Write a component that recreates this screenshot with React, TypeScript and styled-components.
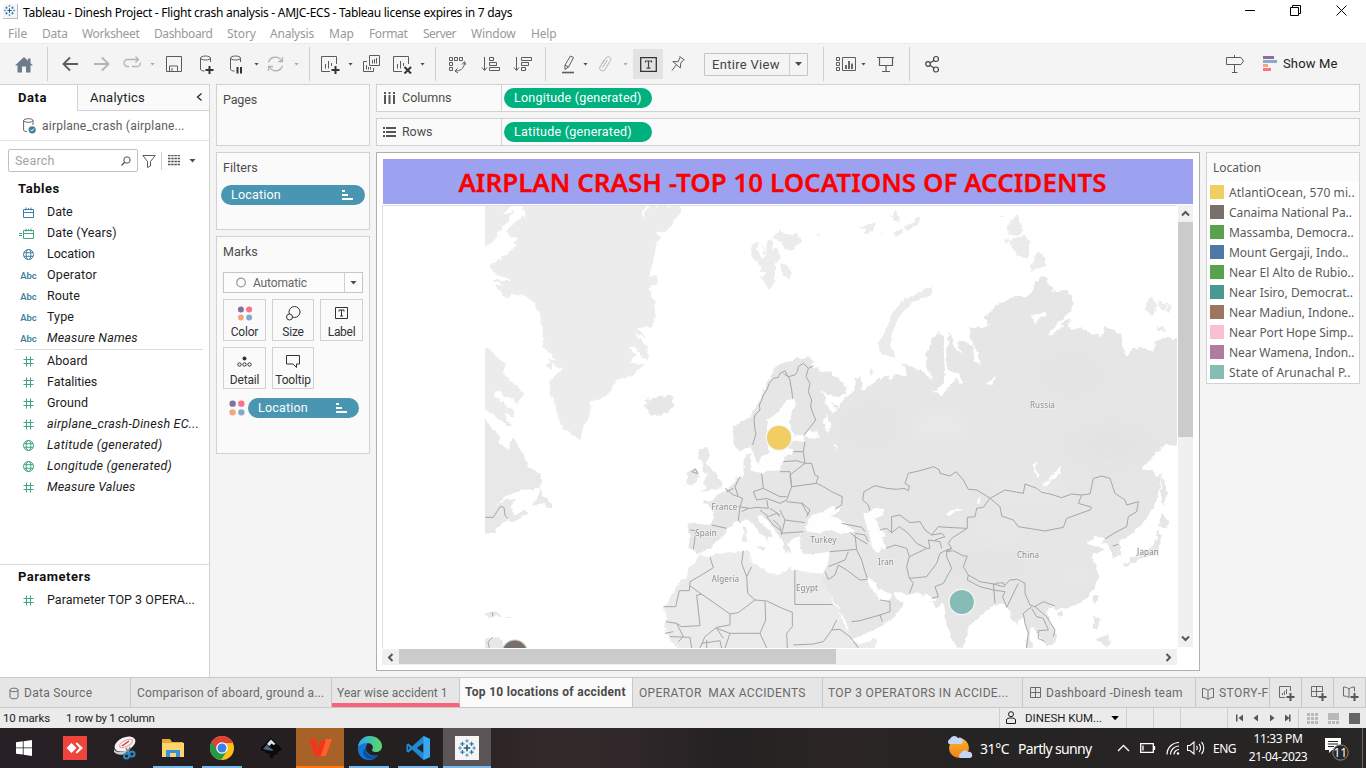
import React from 'react';
import styled, { createGlobalStyle } from 'styled-components';

const UI = 'Roboto, "Liberation Sans", sans-serif';
const SYS = '"Noto Sans", "Open Sans", sans-serif';

const GlobalStyle = createGlobalStyle`
  * { box-sizing: border-box; }
  body { margin: 0; background: #f4f4f4; font-family: ${UI}; font-size: 12.5px; color: #222; overflow: hidden; }
  svg { display: block; flex: none; }
`;

const Window = styled.div`
  width: 1366px;
  height: 768px;
  display: flex;
  flex-direction: column;
  background: #f4f4f4;
`;

const Txt = styled.span<{ $ls?: number }>`
  white-space: pre;
  letter-spacing: ${(p) => p.$ls ?? 0}px;
`;

/* ---------- window chrome ---------- */
const TitleBar = styled.header`
  height: 24px;
  flex: none;
  background: #fff;
  display: flex;
  align-items: center;
  padding-left: 3px;
  font: 12px ${SYS};
  color: #000;
`;
const AppIcon = styled.div`
  width: 15px;
  height: 15px;
  margin-right: 5px;
  margin-top: -2px;
  border-right: 1px solid #bbb;
  border-bottom: 1px solid #bbb;
  background: #f7f7f7;
`;
const WindowButtons = styled.div`
  margin-left: auto;
  margin-right: 19px;
  margin-top: -4px;
  display: flex;
  gap: 35px;
`;
const MenuBar = styled.nav`
  height: 19px;
  flex: none;
  background: #fff;
  display: flex;
  align-items: center;
  padding-left: 8px;
  font: 12px ${SYS};
  color: #999;
`;
const MenuItem = styled.span<{ $w: number; $ls: number }>`
  width: ${(p) => p.$w}px;
  white-space: nowrap;
  letter-spacing: ${(p) => p.$ls}px;
`;

/* ---------- toolbar ---------- */
const Toolbar = styled.div`
  height: 41px;
  flex: none;
  display: flex;
  align-items: center;
  border-top: 1px solid #ececec;
`;
const Tool = styled.div<{ $gap: number; $w: number; $dim?: boolean }>`
  margin-left: ${(p) => p.$gap}px;
  width: ${(p) => p.$w}px;
  flex: none;
  display: flex;
  justify-content: center;
  color: ${(p) => (p.$dim ? '#b4b4b4' : '#5c5c5c')};
`;
const ToolActive = styled(Tool)`
  height: 30px;
  align-items: center;
  background: #e3e3e3;
`;
const Divider = styled.div<{ $gap: number }>`
  margin-left: ${(p) => p.$gap}px;
  width: 1px;
  height: 34px;
  flex: none;
  background: #cfcfcf;
`;
const Caret = styled.i<{ $gap?: number; $dim?: boolean; $w?: number; $c?: string }>`
  margin-left: ${(p) => p.$gap ?? 0}px;
  flex: none;
  width: ${(p) => p.$w ?? 5}px;
  height: ${(p) => ((p.$w ?? 5) + 1) / 2}px;
  background: ${(p) => p.$c ?? (p.$dim ? '#a8a8a8' : '#4c4c4c')};
  clip-path: polygon(0 0, 100% 0, 50% 100%);
`;
const FitSelect = styled.div`
  margin-left: 19px;
  width: 104px;
  height: 23px;
  flex: none;
  display: flex;
  align-items: center;
  border: 1px solid #c4c4c4;
  border-radius: 1px;
  padding-left: 7px;
  font-size: 13px;
  color: #444;
`;
const SelectArrow = styled.div<{ $w: number }>`
  width: ${(p) => p.$w}px;
  margin-left: auto;
  align-self: stretch;
  display: flex;
  align-items: center;
  justify-content: center;
  border-left: 1px solid #d0d0d0;
`;
const ShowMe = styled.div`
  margin-left: 6px;
  padding-bottom: 1px;
  font-size: 13px;
  letter-spacing: 0.15px;
  color: #222;
`;

/* ---------- body ---------- */
const Body = styled.main`
  height: 593px;
  flex: none;
  display: flex;
`;
const DataPane = styled.aside`
  width: 210px;
  flex: none;
  background: #fff;
  border-right: 1px solid #d2d2d2;
  border-top: 1px solid #d2d2d2;
  display: flex;
  flex-direction: column;
`;
const PaneTabs = styled.div`
  height: 26px;
  flex: none;
  display: flex;
  font-size: 13px;
`;
const PaneTab = styled.div<{ $active?: boolean }>`
  display: flex;
  align-items: center;
  ${(p) =>
    p.$active
      ? 'width:77px;padding:0 0 1px 18px;font-weight:700;color:#111;'
      : 'flex:1;padding:0 7px 0 12px;justify-content:space-between;background:#fafafa;border-left:1px solid #d2d2d2;border-bottom:1px solid #d2d2d2;color:#222;'}
`;
const SourceRow = styled.div`
  height: 30px;
  flex: none;
  display: flex;
  align-items: center;
  gap: 6px;
  padding-left: 23px;
  border-bottom: 1px solid #e2e2e2;
  font-size: 12px;
  color: #5c5c5c;
`;
const SearchRow = styled.div`
  display: flex;
  align-items: center;
  margin-top: 8px;
  padding-left: 8px;
  height: 23px;
`;
const SearchBox = styled.div`
  width: 130px;
  height: 23px;
  border: 1px solid #c0c0c0;
  border-radius: 2px;
  display: flex;
  align-items: center;
  justify-content: space-between;
  padding: 0 6px;
  color: #a3a3a3;
`;
const SearchIcon = styled.div`
  color: #555;
`;
const SearchSep = styled.div`
  width: 1px;
  height: 18px;
  margin: 0 6px 0 5px;
  background: #cfcfcf;
`;
const GroupTitle = styled.div`
  height: 24px;
  margin-top: 5px;
  padding-left: 18px;
  line-height: 23px;
  font-size: 13px;
  font-weight: 700;
  color: #111;
`;
const Field = styled.div<{ $italic?: boolean }>`
  height: 21px;
  display: flex;
  align-items: center;
  color: #1c1c1c;
  font-style: ${(p) => (p.$italic ? 'italic' : 'normal')};
`;
const FieldIcon = styled.div<{ $c: string; $eq?: boolean }>`
  width: 47px;
  padding: 1px 10px 0 ${(p) => (p.$eq ? 16 : 20)}px;
  display: flex;
  justify-content: center;
  align-items: center;
  flex: none;
  color: ${(p) => p.$c};
  font: 600 9.5px ${UI};
`;
const FieldRule = styled.div`
  height: 1px;
  margin: 1px 6px 0 15px;
  background: #dcdcdc;
`;
const Params = styled.div`
  margin-top: auto;
  height: 113px;
  border-top: 1px solid #dcdcdc;
`;
const ParamTitle = styled(GroupTitle)`
  margin-top: 0;
`;

const Cards = styled.section`
  width: 154px;
  margin-left: 6px;
  flex: none;
  display: flex;
  flex-direction: column;
  gap: 6px;
`;
const Card = styled.div<{ $h: number }>`
  height: ${(p) => p.$h}px;
  flex: none;
  background: #fafafa;
  border: 1px solid #d2d2d2;
  color: #4c4c4c;
`;
const CardTitle = styled.div`
  height: 30px;
  padding-left: 6px;
  line-height: 29px;
`;
const Pill = styled.div<{ $w: number; $c: string }>`
  width: ${(p) => p.$w}px;
  height: 20px;
  flex: none;
  border-radius: 10px;
  background: ${(p) => p.$c};
  color: #fff;
  display: flex;
  align-items: center;
  justify-content: space-between;
  padding: 0 12px 1px 10px;
`;
const FilterSlot = styled.div`
  padding: 2px 0 0 4px;
`;
const MarkType = styled.div`
  width: 140px;
  height: 21px;
  margin: 5px 0 6px 6px;
  border: 1px solid #c6c6c6;
  background: #fcfcfc;
  display: flex;
  align-items: center;
  font-size: 12px;
  color: #666;
`;
const MarkGrid = styled.div`
  display: grid;
  grid-template-columns: 43px 42px 43px;
  grid-auto-rows: 42px;
  gap: 6px 6px;
  padding-left: 6px;
`;
const MarkButton = styled.div`
  border: 1px solid #d0d0d0;
  display: flex;
  flex-direction: column;
  align-items: center;
  padding-top: 5px;
  font-size: 12px;
  color: #333;
  line-height: 18px;
`;
const MarkPillRow = styled.div`
  display: flex;
  align-items: center;
  gap: 3px;
  padding: 9px 0 0 12px;
`;

const Sheet = styled.section`
  width: 984px;
  margin-left: 6px;
  flex: none;
  display: flex;
  flex-direction: column;
`;
const Shelf = styled.div`
  height: 28px;
  flex: none;
  margin-bottom: 6px;
  border: 1px solid #d2d2d2;
  background: #fafafa;
  display: flex;
  align-items: center;
`;
const ShelfName = styled.div`
  width: 125px;
  align-self: stretch;
  display: flex;
  align-items: center;
  gap: 6px;
  padding: 0 0 1px 6px;
  border-right: 1px solid #d2d2d2;
  margin-right: 2px;
  color: #4c4c4c;
`;
const SheetRow = styled.div`
  display: flex;
  gap: 6px;
  align-items: flex-start;
`;
const Viz = styled.div`
  width: 824px;
  height: 519px;
  border: 1px solid #b0b0b0;
  background: #fff;
  padding: 6px 0 0 5px;
`;
const VizTitle = styled.h1`
  margin: 0 0 0 1px;
  width: 810px;
  height: 45px;
  padding-right: 11px;
  background: #9da2f0;
  color: #fb0000;
  font: 600 26px/46px ${SYS};
  -webkit-text-stroke: 0.3px #fb0000;
  text-align: center;
  white-space: nowrap;
`;
const VizFrame = styled.div`
  margin-top: 1px;
  display: grid;
  grid-template-columns: 796px 15px;
  grid-template-rows: 443px 16px;
  row-gap: 1px;
`;
const MapBox = styled.div`
  border-left: 1px solid #dedede;
  border-top: 1px solid #dedede;
  width: 795px;
  height: 443px;
`;
const VScroll = styled.div`
  background: #f0f0f0;
  display: flex;
  flex-direction: column;
  justify-content: space-between;
  align-items: center;
  height: 442px;
`;
const VThumb = styled.div`
  width: 15px;
  height: 215px;
  margin-bottom: auto;
  background: #cbcbcb;
`;
const HScroll = styled.div`
  width: 795px;
  height: 16px;
  background: #f0f0f0;
  display: flex;
  justify-content: space-between;
`;
const HThumb = styled.div`
  width: 437px;
  height: 15px;
  margin-right: auto;
  background: #cbcbcb;
`;
const ScrollArrow = styled.div<{ $r: number }>`
  width: 17px;
  height: 17px;
  flex: none;
  display: flex;
  align-items: center;
  justify-content: center;
  & svg { transform: rotate(${(p) => p.$r}deg); }
`;
const Legend = styled.div`
  width: 154px;
  height: 232px;
  border: 1px solid #d2d2d2;
  background: #fff;
  font: 12px ${SYS};
  color: #5a5a5a;
`;
const LegendHead = styled.div`
  height: 29px;
  padding-left: 6px;
  line-height: 30px;
  background: #fafafa;
`;
const LegendItem = styled.div`
  height: 20px;
  display: flex;
  align-items: center;
  gap: 5px;
  padding-left: 3px;
`;
const Swatch = styled.i<{ $c: string }>`
  width: 14px;
  height: 14px;
  flex: none;
  background: ${(p) => p.$c};
`;

/* ---------- bottom ---------- */
const SheetTabs = styled.div`
  height: 31px;
  flex: none;
  display: flex;
  border-top: 1px solid #c8c8c8;
  border-bottom: 1px solid #c8c8c8;
  background: #e6e6e6;
  font-size: 12px;
  color: #6a6a6a;
`;
const SheetTab = styled.div<{ $w: number; $active?: boolean; $mark?: boolean; $pl?: number }>`
  width: ${(p) => p.$w}px;
  flex: none;
  overflow: hidden;
  display: flex;
  align-items: center;
  gap: 5px;
  padding-left: ${(p) => p.$pl ?? 5}px;
  border-right: 1px solid #c8c8c8;
  border-bottom: ${(p) => (p.$mark ? '4px solid #f86377' : '0')};
  padding-top: ${(p) => (p.$mark ? '5px' : p.$active ? '0' : '1px')};
  ${(p) => p.$active && 'background:#fafafa;color:#4a4a4a;font-weight:700;padding-bottom:2px;'}
`;
const StatusBar = styled.div`
  height: 20px;
  flex: none;
  display: flex;
  background: #ebebeb;
  font-size: 11.5px;
  color: #1c1c1c;
`;
const StatusCell = styled.div<{ $w: number; $pl?: number; $gap?: number; $line?: boolean }>`
  width: ${(p) => p.$w}px;
  flex: none;
  display: flex;
  align-items: center;
  padding-left: ${(p) => p.$pl ?? 0}px;
  gap: ${(p) => p.$gap ?? 0}px;
  border-left: ${(p) => (p.$line ? '1px solid #cfcfcf' : '0')};
`;
const Taskbar = styled.footer`
  height: 40px;
  flex: none;
  display: flex;
  background: linear-gradient(90deg, #272126 0, #251f21 15%, #252020 32%, #33292a 40%, #30282a 46%, #242122 53%, #2b2625 61%, #252323 72%, #282525 100%);
  color: #fff;
  font: 14px ${SYS};
`;
const Task = styled.div<{ $bg?: string; $bar?: string; $barW?: number; $ml?: number }>`
  position: relative;
  width: 48px;
  margin-left: ${(p) => p.$ml ?? 1}px;
  display: flex;
  align-items: center;
  justify-content: center;
  background: ${(p) => p.$bg ?? 'transparent'};
  &::after {
    content: '';
    position: absolute;
    bottom: 0;
    left: ${(p) => (48 - (p.$barW ?? 0)) / 2}px;
    width: ${(p) => p.$barW ?? 0}px;
    height: 2px;
    background: ${(p) => p.$bar ?? 'transparent'};
  }
`;
const Tray = styled.div`
  margin-left: auto;
  width: 419px;
  display: flex;
  align-items: center;
`;
const TrayItem = styled.div<{ $gap: number; $w: number }>`
  margin-left: ${(p) => p.$gap}px;
  width: ${(p) => p.$w}px;
  flex: none;
  white-space: nowrap;
`;
const Language = styled(TrayItem)`
  font-size: 12px;
  letter-spacing: -0.5px;
`;
const Clock = styled(TrayItem)`
  font: 12px/18px ${SYS};
  text-align: center;
  padding-bottom: 1px;
`;
const PeekEdge = styled.div`
  width: 1px;
  height: 40px;
  margin-left: 11px;
  background: #6a6868;
`;

/* ---------- icons ---------- */
const Svg = ({ w, h = 20, children, sw = 1 }: { w: number; h?: number; children: React.ReactNode; sw?: number }) => (
  <svg width={w} height={h} viewBox={`0 0 ${w} ${h}`} fill="none" stroke="currentColor" strokeWidth={sw}>
    {children}
  </svg>
);
const TableauMark = ({ s }: { s: number }) => (
  <svg width={s} height={s} viewBox="0 0 24 24" stroke="#27617f" strokeWidth="1.5" fill="none">
    <path d="M12 8v8M8 12h8" strokeWidth="2" />
    <path d="M12 1.5v4M10 3.5h4M12 18.5v4M10 20.5h4M1.5 12h4M3.5 10v4M18.5 12h4M20.5 10v4" stroke="#5a9bc0" />
    <path d="M6.5 4.5v5M4 7h5M17.5 4.5v5M15 7h5M6.5 14.5v5M4 17h5M17.5 14.5v5M15 17h5" stroke="#2d7ba8" />
  </svg>
);
const Cylinder = () => <path d="M11.500 8V4c0-1-2-2-5-2s-5 1-5 2 2 2 5 2 5-1 5-2M1.500 4v11c0 1.500 1.500 2 4 2" />;
const Hash = () => (
  <Svg w={11} h={11}><path d="M3.500 .5v10M7.500 .5v10M.5 3.500h10M.5 7.500h10" /></Svg>
);
const Globe = () => (
  <Svg w={11} h={11}><circle cx="5.5" cy="5.5" r="5" /><ellipse cx="5.5" cy="5.5" rx="2.3" ry="5" /><path d="M1 3.700h9M1 7.300h9" /></Svg>
);
const Calendar = ({ eq }: { eq?: boolean }) => (
  <svg width={eq ? 15 : 11} height="11" viewBox={eq ? '-4 0 15 11' : '0 0 11 11'} fill="none" stroke="currentColor">
    <path d="M.5 2.500h10v8H.5zM.5 5.500h10M3 .5v3M5.500 1v2M8 .5v3" />
    {eq && <path d="M-4 5.500h3M-4 7.500h3" />}
  </svg>
);
const SortIcon = () => (
  <svg width="11" height="10" viewBox="0 0 11 10" fill="#fff"><path d="M0 0h3v2H0zM0 4h6v2H0zM0 8h11v2H0z" /></svg>
);
const Dots = ({ s = 15 }: { s?: number }) => (
  <svg width={s} height={s} viewBox="0 0 15 15" stroke="none">
    <circle cx="3.4" cy="3.4" r="3" fill="#8a6e9b" /><circle cx="11.6" cy="3.4" r="3" fill="#fb7185" />
    <circle cx="3.4" cy="11.6" r="3" fill="#f3a77c" /><circle cx="11.6" cy="11.6" r="3" fill="#85a9cf" />
  </svg>
);
const Chevron = () => (
  <svg width="9" height="9" viewBox="0 0 9 9" fill="none" stroke="#555" strokeWidth="2"><path d="M1 6.500 4.500 3 8 6.500" /></svg>
);

const WorldMap = () => (
  <svg width="794" height="442" viewBox="383 206 794 442">
    <defs>
      <clipPath id="tiles"><rect x="485" y="206" width="692" height="442" /></clipPath>
      <filter id="coast" filterUnits="userSpaceOnUse" x="470" y="190" width="720" height="470" colorInterpolationFilters="sRGB">
        <feTurbulence type="fractalNoise" baseFrequency="0.2" numOctaves="2" seed="4" />
        <feDisplacementMap in="SourceGraphic" scale="5" xChannelSelector="R" yChannelSelector="G" />
      </filter>
      <filter id="relief" x="-40%" y="-40%" width="180%" height="180%"><feGaussianBlur stdDeviation="9" /></filter>
    </defs>
    <g clipPath="url(#tiles)">
      <g filter="url(#coast)">
        <g transform="translate(380 200) scale(.33333)" fill="#ececec">
          <path d="M300 0H405L385 28 365 42 405 32 372 78 340 125 315 140 300 120z" />
          <path d="M425 0H800L785 55 810 18 900 18 902 38 880 62 858 95 825 100 845 110 830 130 820 180 808 230 832 225 835 250 805 265 822 300 828 345 815 380 770 385 800 415 765 400 790 430 802 440 805 480 790 475 770 445 745 440 770 465 745 490 795 493 760 525 710 540 690 580 660 598 632 605 628 650 610 680 602 720 575 700 550 690 530 640 522 600 508 580 512 535 530 525 545 510 500 475 530 480 498 448 490 440 488 400 482 350 465 310 440 288 400 283 375 295 345 258 370 255 335 240 392 240 335 215 330 195 380 165 405 140 408 110 380 105 385 85 430 48 440 62 428 20z" />
          <path d="M498 490 520 488 515 508 500 505z" />
          <path d="M300 445H320L335 450 350 472 378 492 368 518 395 545 432 578 412 612 400 595 375 590 350 570 338 590 365 600 380 620 400 630 403 655 375 640 390 678 360 660 335 640 300 625zM300 668 320 670 340 690 355 705 358 730H300z" />
          <path d="M785 585 805 600 787 602 805 612 787 617 803 625 802 640 830 648 860 640 882 615 878 595 868 582 850 592 830 590 810 600z" fill="#e7e7e7" />
          <path d="M1113 130 1137 126 1132 150 1150 180 1155 170 1146 130 1158 160 1160 120 1175 120 1178 150 1190 140 1202 175 1185 190 1185 235 1168 270 1145 235 1158 220 1140 215 1150 195 1135 200 1115 165zM1180 110 1200 88 1222 105 1250 98 1266 120 1240 150 1220 150 1200 125zM1200 188 1220 195 1235 218 1228 240 1210 225z" />
        </g>
        <g transform="translate(780 200) scale(.33333)" fill="#ebebeb">
          <path d="M108 105l14-6-6 9zM236 82l24-8 30-6-14 26-26 8 10-16zM325 50l12-2 10-18 14 38-20-8zM340 100l24-14 2 14-20 10zM370 82l25-12 20-22 7 18-37 26zM302 102l8-6 2 8zM660 50l8-4 2 6z" />
          <path d="M437 262 455 260 457 282 430 295 400 305 370 335 350 365 335 400 330 440 348 472 320 470 298 450 295 430 310 405 325 370 345 330 375 295 410 283z" />
          <path d="M708 45 725 68 728 92 715 108 690 105 680 85 690 60zM695 115 735 108 748 125 745 177 720 170 700 150 688 128zM775 150 798 180 795 200 770 203 748 214 760 185zM668 115 692 120 680 132z" />
          <path d="M1100 300 1115 292 1135 315 1115 345 1098 330zM1138 300 1160 318 1152 332 1138 320zM1150 303 1174 315 1168 335 1155 336 1166 322zM1130 378 1155 383 1153 396 1132 392zM470 392l12 2-4 10zM265 515l12-8 4 8-10 12z" />
          <path fill="#e6e6e6" d="M1 492 20 485 35 488 50 470 65 478 80 468 103 486 95 494 120 512 150 515 180 540 197 560 195 580 180 592 150 585 118 570 140 592 133 612 160 640 168 630 155 605 175 625 187 600 205 585 220 580 228 555 222 532 240 532 247 550 238 572 255 570 275 550 300 535 330 525 325 540 350 522 380 530 378 505 362 485 380 495 410 505 435 520 458 540 448 515 440 500 438 460 452 440 455 410 475 402 492 408 492 460 495 520 485 560 458 576 485 586 512 555 530 530 540 555 550 550 535 515 508 515 500 490 502 440 508 400 518 410 518 440 546 462 532 430 548 422 580 440 582 480 600 500 592 455 572 420 568 385 610 380 630 375 610 352 660 310 700 290 740 292 760 270 765 245 790 230 803 240 800 250 818 262 812 275 855 270 875 290 878 320 860 345 830 375 800 412 850 380 845 370 875 355 862 370 878 390 900 382 930 400 965 408 975 380 1000 390 1020 400 1025 430 1040 470 1060 445 1090 445 1120 455 1125 430 1150 412 1230 425V735H40L-5 745-40 790-60 802-75 770-90 735-120 755-140 730-140 680-90 650-60 600-35 545-15 500z" />
        </g>
        <g transform="translate(380 420) scale(.33333)" fill="#e8e8e8">
          <path d="M300 0H315L335 20 355 45 360 75 385 90 400 50 415 80 430 105 445 140 480 160 487 190 475 205 430 210 400 218 370 235 350 258 375 240 408 236 392 262 402 285 440 270 445 278 400 308 385 300 360 315 345 335 300 347z" />
          <path d="M350 -5 380 5 400 20 375 12zM485 200 475 225 456 257 490 250 512 265 515 250 490 232z" />
          <path d="M305 585 325 575 350 577 366 588 330 590zM380 591h14v3h-14zM300 662 320 655 340 650 368 658 370 700H300z" />
          <path d="M918 160 945 143 958 155 950 190 916 197 922 178zM957 88 985 83 990 110 975 125 1000 155 1025 185 1022 205 962 216 985 200 968 190 985 165 965 155 970 135 955 115z" />
          <path d="M1092 318 1101 322 1099 367 1088 362zM1128 380 1156 378 1152 394z" />
          <path fill="#ebebeb" d="M958 405 985 412 1005 402 1060 395 1110 392 1112 425 1140 440 1175 460 1200 466 1230 440 1245 452 1332 458 1342 490 1360 550 1380 575 1392 610 1412 640 1415 665 1440 672 1490 655 1485 720H925L870 660 852 620 860 590 850 565 865 540 890 500 920 470 925 445 950 425z" />
        </g>
        <g transform="translate(780 420) scale(.33333)" fill="#e6e6e6">
          <path d="M-110 112-88 100-86 125-90 152-50 160 0 140 20 100 40-20H1230V68L1160 70 1140 90 1110 120 1083 148 1115 152 1130 168 1144 158 1140 200 1130 240 1110 280 1080 320 1050 345 1018 362 1022 405 1000 418 995 395 985 375 965 368 978 355 945 350 918 372 950 380 975 388 940 402 935 415 948 435 955 465 945 500 925 530 900 550 870 560 840 565 830 572 815 562 800 570 808 600 830 640 830 665 800 680 795 662 775 650 765 630 755 622 748 650 765 700H738L740 640 733 600 725 590 712 612 695 600 690 575 672 550 645 555 620 570 600 590 565 620 560 650 548 686 530 684 515 650 500 620 495 570 490 550 470 565 455 545 470 540 440 525 410 520 385 524 345 515 335 522 300 510 280 485 265 470 262 490 285 520 300 542 325 545 340 512 345 535 372 552 345 590 300 620 260 640 225 655 213 650 205 620 185 580 160 540 140 500 122 478 135 470 133 452 142 438 150 395 95 402 62 400 62 345 48 350 25 370 35 400 15 400 8 365-15 330-45 292-70 285-60 305-25 335-22 350-38 345-32 370-65 330-95 300-130 305-160 325-162 340-195 370-212 387-245 400-260 390-275 385-270 345-278 325-272 310-205 315-200 290-212 258-232 248-226 240-205 245-190 225-155 208-130 175-108 165z" />
          <path d="M1142 278 1172 308 1152 325 1137 320zM1134 325 1144 350 1137 390 1110 408 1075 418 1040 440 1030 435 1060 412 1100 400 1110 385 1130 355zM1145 158 1162 215 1150 262 1142 220zM945 525l10 4-10 24-7-12zM830 578l20-4-8 18zM943 590l17 8-8 32-14-6zM950 655l35-12 6 30-10 10-24-20z" />
          <g fill="#fefefe">
            <path d="M20-60 45-62 47-45 32-15 30 15 45 48 80 40 85 30 110 35 118 48 100 58 75 52 70 62 40 65 20 78 42 92 35 108 20 100 8 125 0 150-50 156-70 140-58 115-35 100-40 0-10-20z" />
            <path d="M130 0l10-20 12 40-8 20zM160 75l8-2 8 20z" />
            <path d="M75 320 95 285 120 278 150 262 185 262 170 282 150 288 175 295 200 315 228 335 215 340 180 338 150 330 110 340 80 330z" />
            <path d="M250 280 290 263 312 268 310 285 285 295 300 330 318 345 305 350 320 385 290 395 272 380 270 350 262 330 255 305z" />
            <path d="M500 285l15-15 38-3-30 10-10 10zM785 195l35-30 23-30-3 25-42 38zM592 240l10-8-4 20zM620-110l30-20-14 26zM755 130l22-5-12 20 16 20-8 10-8-20z" />
            <path d="M750-315l30-5 15-5 4 12-24 10-8 16z" />
          </g>
        </g>
      </g>
      <g filter="url(#relief)" fill="#dedede" opacity=".3">
        <ellipse cx="1110" cy="445" rx="40" ry="16" /><ellipse cx="1070" cy="375" rx="26" ry="12" />
        <ellipse cx="870" cy="425" rx="26" ry="12" /><ellipse cx="985" cy="565" rx="34" ry="10" />
      </g>
      <g filter="url(#relief)" fill="#efefef" opacity=".35">
        <ellipse cx="940" cy="425" rx="30" ry="14" /><ellipse cx="1030" cy="490" rx="40" ry="10" />
        <ellipse cx="1000" cy="530" rx="30" ry="8" /><ellipse cx="1075" cy="575" rx="16" ry="8" />
      </g>
      <g fill="none" stroke="#a6a6a6" strokeWidth="3" strokeLinejoin="round">
        <g transform="translate(780 420) scale(.33333)">
          <path d="M270 272 265 255 248 240 252 215 285 197 320 205 350 208 372 205 385 212 388 198 375 190 385 160 420 152 462 140 478 150 480 160 510 168 528 155 550 180 565 208 590 210 610 222 630 235 675 210 730 220 735 192 770 205 785 217 810 222 845 233 875 222 905 225 930 222 940 175 965 168 990 175 1005 220 1035 240 1040 255 1075 245 1070 275 1045 290 1040 320 1005 338 975 357" />
          <path d="M630 235 660 260 665 288 700 300 715 320 795 333 850 322 860 295 930 270 935 262 895 250 905 225M630 235 610 262 590 265 585 290 562 292 562 325 515 355 505 370 515 385 500 395M335 338V290L360 285 390 308 420 305 435 330 455 345 475 320 500 322 560 325" />
          <path d="M300 330 320 325 335 338 358 320 385 340 410 370 440 385 450 385 445 360 480 365 485 385M455 345l30-5 10 10-30 10M318 385 345 375 380 385 388 410 420 395 440 385M388 410 380 440 388 475 440 470 470 430 480 400 500 390 515 385M388 475 400 490 388 520M500 390 500 410 515 445 490 490 465 500 475 530 455 535" />
          <path d="M500 395 520 392 550 408 562 408 550 440 565 465 600 485 640 492 670 500 690 480 712 478 735 490 735 520 750 555 765 560 790 545 825 558M565 465 562 480 600 500 640 510M640 490 645 550M640 510 675 515 668 530 680 562 715 490M645 490l25-2 5 12M755 560 730 580 735 610 745 640 738 690M755 565 770 590 790 595 805 630 775 632 775 655 795 665M765 560 800 590 825 630 820 650M998 378l17-5" />
          <path d="M225 345 230 390 245 420 255 455 262 475M150 395 230 388M205 395 195 420 145 440M175 435 200 450 240 480 262 478M135 455 145 478 165 465 175 435M215 605 240 602 300 585 330 575 330 545 300 540M300 585 307 605M44.500 450V553.500H158M37 577V620L20 640 22 684M170 600 155 630 130 665 100 672 40 675M155 630 180 628 210 650 235 684" />
          <path d="M185 310 245 322 255 335M210 337 225 350 262 372M225 340l30 5 10 20M35 200 110 190 130 200 155 215 187 230 185 255 165 268M35 200 30 165 75 130 95 130 105 165 115 170 108 190M10 125 50 122 75 130 70 95 40 95M75 65 70 95M30 155 35 200 20 240 0 250M0 155h30M0 230h20M20 245 65 250 85 285M65 248 90 270 80 290M15 300 75 308M5 340 70 335M0 270l15 30-10 40M-20 300 0 320 5 345" />
        </g>
        <g transform="translate(780 200) scale(.33333)">
          <path d="M-75 690 -78 660 -75 645 -60 630 -62 615 -55 600 -50 585 -40 570 -32 550 -20 535 -5 532 0 520 15 512 22 525 30 540 32 555 35 570 38 595M10 520 25 530 45 525 52 515 55 500 70 490 85 505 100 498M85 505 78 530 90 550 85 575 95 600 92 618 97 635 107 660 70 708M-75 690-72 700-82 735" />
        </g>
        <g transform="translate(380 420) scale(.33333)">
          <path d="M1080 170 1065 200 1075 230 1088 235 1080 260 1075 300 1082 308M1035 205 1060 225 1075 230M1040 215 1060 205M1145 160 1150 205 1120 215 1130 240 1160 235 1200 250M1150 205 1200 230M1075 260 1110 265 1130 262 1165 265 1160 240M1085 275l20-10M1140 270 1165 290 1190 280 1200 290M1160 290 1180 315 1200 330M1170 265 1200 285M995 315 1040 325M930 330 948 332 940 388M935 155l12-8 5 14z" />
          <path d="M990 412 1000 443 965 465 930 485 928 512 898 512 887 560 850 560M930 498 1050 582 1075 578 1125 540 1160 543 1200 562 1237 577M1125 540 1103 520 1100 470 1085 430 1090 392M1100 470 1115 440M950 525 960 617 905 620 890 610 858 605M950 525 965 523M1050 582 1050 615 1010 622 975 650 960 684M1155 545 1157 600 1140 640 1050 640 1010 625M1140 640 1160 684M855 640l25-5M870 650 930 652 935 684M965 670 1020 662 1025 684M1050 640 1035 684M890 610 910 650 895 665M980 660V690M1010 625l20 30" />
          <path d="M315 292H340L360 260 372 262 375 285 383 296M338 576v14M338 652l-14 14 4 20" />
        </g>
      </g>
      <g fontFamily='"Noto Sans", sans-serif' fontSize="8" fill="#8c8c8c" stroke="#f0f0f0" strokeWidth="1.5" paintOrder="stroke" textAnchor="middle">
        {([['Russia', 1042.5, 408], ['France', 724.5, 510], ['Spain', 706, 536], ['Algeria', 725.5, 582], ['Turkey', 823.5, 542.5], ['Egypt', 807, 591], ['Iran', 886, 565], ['China', 1028, 558], ['Japan', 1148, 555]] as [string, number, number][]).map(([t, x, y]) => (
          <text key={t} x={x} y={y} letterSpacing=".15">{t}</text>
        ))}
      </g>
      <g stroke="#f6f6f6" strokeWidth="1.2">
        <circle cx="779" cy="437.8" r="12.7" fill="#f1ce63" />
        <circle cx="961.8" cy="602" r="12.7" fill="#86bcb6" />
        <circle cx="514.8" cy="652.7" r="12.7" fill="#79706e" stroke="#c9d0c4" />
      </g>
    </g>
  </svg>
);

const blue = '#3f7f9f';
const green = '#41a57f';
type FieldRow = [string, 'date' | 'years' | 'globe' | 'abc' | 'hash', string, number, boolean?];
const dims: FieldRow[] = [
  ['Date', 'date', blue, 0], ['Date (Years)', 'years', green, 0.07], ['Location', 'globe', blue, -0.05],
  ['Operator', 'abc', blue, 0.2], ['Route', 'abc', blue, 0.1], ['Type', 'abc', blue, 0.1], ['Measure Names', 'abc', blue, 0.16, true],
];
const measures: FieldRow[] = [
  ['Aboard', 'hash', green, 0.08], ['Fatalities', 'hash', green, -0.05], ['Ground', 'hash', green, 0.08],
  ['airplane_crash-Dinesh EC...', 'hash', green, 0.22, true], ['Latitude (generated)', 'globe', green, 0.3, true],
  ['Longitude (generated)', 'globe', green, 0.27, true], ['Measure Values', 'hash', green, 0.15, true],
];
const FieldLine = ({ f: [name, icon, color, ls, italic] }: { f: FieldRow }) => (
  <Field $italic={italic}>
    <FieldIcon $c={color} $eq={icon === 'years'}>
      {icon === 'date' && <Calendar />}
      {icon === 'years' && <Calendar eq />}
      {icon === 'globe' && <Globe />}
      {icon === 'abc' && <span>Abc</span>}
      {icon === 'hash' && <Hash />}
    </FieldIcon>
    <Txt $ls={ls}>{name}</Txt>
  </Field>
);

const legend: [string, string, number][] = [
  ['AtlantiOcean, 570 mi..', '#f1ce63', 0.1], ['Canaima National Pa..', '#79706e', -0.05], ['Massamba, Democra..', '#59a14f', -0.03],
  ['Mount Gergaji, Indo..', '#4e79a7', -0.02], ['Near El Alto de Rubio..', '#59a14f', -0.02], ['Near Isiro, Democrat..', '#499894', 0],
  ['Near Madiun, Indone..', '#9d7660', -0.07], ['Near Port Hope Simp..', '#fabfd2', -0.06], ['Near Wamena, Indon..', '#b07aa1', -0.07],
  ['State of Arunachal P..', '#86bcb6', 0.12],
];

const BarsBox = () => <path d="M9 17.500H.5v-15h15V10M4.500 14.500V10M7.500 14.500V7M10.500 12V9" />;

export default function App() {
  return (
    <Window>
      <GlobalStyle />
      <TitleBar>
        <AppIcon><TableauMark s={13} /></AppIcon>
        <Txt $ls={-0.27}>Tableau - Dinesh Project - Flight crash analysis - AMJC-ECS - Tableau license expires in 7 days</Txt>
        <WindowButtons>
          <svg width="10" height="11" stroke="#000"><path d="M0 5.500h10" /></svg>
          <svg width="11" height="11" stroke="#000" fill="none"><path d="M.5 2.500h8v8h-8zM2.500 2.500v-2h8v8h-2" /></svg>
          <svg width="11" height="11" stroke="#000"><path d="M.5.5l10 10M10.500.5l-10 10" /></svg>
        </WindowButtons>
      </TitleBar>
      <MenuBar>
        {([['File', 34, 0], ['Data', 40, -0.2], ['Worksheet', 72, -0.35], ['Dashboard', 73, -0.4], ['Story', 43, -0.1], ['Analysis', 59, -0.2], ['Map', 40, 0], ['Format', 54, -0.4], ['Server', 48, -0.55], ['Window', 60, -0.15], ['Help', 30, -0.2]] as [string, number, number][]).map(([t, w, ls]) => (
          <MenuItem key={t} $w={w} $ls={ls}>{t}</MenuItem>
        ))}
      </MenuBar>

      <Toolbar>
        <Tool $gap={15} $w={18}>
          <svg width="18" height="20"><path fill="#6d7b8b" d="M0 11.500 9 3l4 3.700V4.500h2.500V9l2.500 2.500h-2.500V18.500h-4.500v-6h-4v6H2.500v-7z" /></svg>
        </Tool>
        <Divider $gap={14} />
        <Tool $gap={14} $w={16}><Svg w={16} sw={1.8}><path d="M16 10H1.500M8 3.500 1.500 10 8 16.500" /></Svg></Tool>
        <Tool $gap={16} $w={16} $dim><Svg w={16} sw={1.8}><path d="M0 10h14.500M8 3.500l6.500 6.500L8 16.500" /></Svg></Tool>
        <Tool $gap={13} $w={18} $dim><Svg w={18} sw={1.3}><path d="M6 12.500H4.500a3.500 3.500 0 0 1 0-7H15.500M12.500 2.500l3 3-3 3M9 12.500h5c2.500 0 3.500-2 3.500-4" /></Svg></Tool>
        <Caret $gap={9} $dim />
        <Tool $gap={11} $w={16}><Svg w={16}><path d="M.5 2.500h15v15H.5zM3.500 17v-5h8v5M6 17v-3" /></Svg></Tool>
        <Tool $gap={17} $w={15}><Svg w={15}><Cylinder /><path d="M10.500 12v8M6.500 16h8" strokeWidth="2" stroke="#333" /></Svg></Tool>
        <Tool $gap={15} $w={15}><Svg w={15}><Cylinder /><path d="M8.500 13v6.500M12 13v6.500" strokeWidth="2" stroke="#333" /></Svg></Tool>
        <Caret $gap={10} />
        <Tool $gap={8} $w={17} $dim><Svg w={17} sw={1.3}><path d="M1.500 8.500a7 7 0 0 1 13-1.500M15.500 11.500a7 7 0 0 1-13 1.500M15.500 3v4.500H11M1.500 17v-4.500H6" /></Svg></Tool>
        <Caret $gap={10} $dim />
        <Divider $gap={10} />
        <Tool $gap={11} $w={19}><Svg w={19}><BarsBox /><path d="M14.500 12v8M10.500 16h8" strokeWidth="2" stroke="#333" /></Svg></Tool>
        <Caret $gap={8} />
        <Tool $gap={10} $w={17}><Svg w={17}><path d="M6.500 1.500h10v10h-10zM9.500 9.500V6M11.500 9.500V5M13.500 9.500V4M4 7.500H.5v10h10V14M3.500 15.500V11M5.500 15.500V13M7.500 15.500V13" /></Svg></Tool>
        <Tool $gap={13} $w={19}><Svg w={19}><BarsBox /><path d="M11.500 13l6.500 6.500M18 13l-6.500 6.500" strokeWidth="2" stroke="#333" /></Svg></Tool>
        <Caret $gap={8} />
        <Divider $gap={10} />
        <Tool $gap={13} $w={17}><Svg w={17}><path d="M.5 3.500h3v3h-3zM5.500 3.500h3v3h-3zM10.500 3.500h3v3h-3zM.5 8.500h3v3h-3zM.5 13.500h3v3h-3zM6 17c5 0 9-2 9.500-8M13 10.500l2.500-3 1.500 3.500M8.500 14.500 6 17l3 2" /></Svg></Tool>
        <Tool $gap={15} $w={19}><Svg w={19}><path d="M3.500 3v13M1 13.500l2.500 3 2.500-3M8.500 3.500h4v3h-4zM8.500 8.500h7v3h-7zM8.500 13.500h10v3h-10z" /></Svg></Tool>
        <Tool $gap={13} $w={19}><Svg w={19}><path d="M3.500 3v13M1 13.500l2.500 3 2.500-3M8.500 3.500h10v3h-10zM8.500 8.500h7v3h-7zM8.500 13.500h4v3h-4z" /></Svg></Tool>
        <Divider $gap={13} />
        <Tool $gap={15} $w={14}><Svg w={14}><path d="M9.500 2l3 1.500-5 9.500-3.500 2.500V11zM4 11l3.500 2" /><path d="M1 18.500h12" strokeWidth="1.6" /></Svg></Tool>
        <Caret $gap={8} />
        <Tool $gap={10} $w={14} $dim><Svg w={14}><path d="M4 10l4-6c2-2.500 6-1 4.500 2.500L7 15.500c-2 2.500-6.500 1-5-2.500L6.500 5.500M4.500 13.500 9.500 6" /></Svg></Tool>
        <Caret $gap={11} $dim />
        <ToolActive $gap={5} $w={30}>
          <Svg w={17} h={15}><path d="M.7.7h15.600v13.600H.7z" stroke="#333" strokeWidth="1.3" /><path d="M5.500 5.500V4h6v1.500M8.500 4v7M6.500 11.200h4" stroke="#444" strokeWidth="1.2" /></Svg>
        </ToolActive>
        <Tool $gap={8} $w={14}><Svg w={14}><path d="M8.500 2.500l5 3.500M9.200 3.200 7 7.800 1.800 7.500l7.500 6.500 0.500-5 3-3.500M5.200 11 1 16.500" /></Svg></Tool>
        <FitSelect><Txt $ls={0.3}>Entire View</Txt><SelectArrow $w={18}><Caret $w={7} /></SelectArrow></FitSelect>
        <Divider $gap={15} />
        <Tool $gap={12} $w={20}><Svg w={20}><path d="M.5 3.500h3v3h-3zM.5 8.500h3v3h-3zM.5 13.500h3v3h-3zM6.500 3.500h13v13h-13z" /><path d="M10 15v-4M13 15V7M16 15V9.500" strokeWidth="1.8" /></Svg></Tool>
        <Caret $gap={5} />
        <Tool $gap={11} $w={18}><Svg w={18}><path d="M0 3.500h17M2.500 3.500v8h13v-8M9 11.500v6M5 17.500h8" strokeWidth="1.2" /></Svg></Tool>
        <Divider $gap={14} />
        <Tool $gap={15} $w={14}><Svg w={14}><g stroke="#444" strokeWidth="1.2"><circle cx="3" cy="10" r="2.3" /><circle cx="11" cy="5" r="2.5" /><circle cx="11" cy="15.5" r="2.5" /><path d="M5 9l4-2.500M5 11.300l4 2.700" /></g></Svg></Tool>
        <Tool $gap={287} $w={18}><Svg w={18}><path d="M.5 3.500H15l2.500 3.500-2.500 3.500H.5zM8.500 1v2.500M8.500 10.500v8M6 18.500h5.500" /></Svg></Tool>
        <Tool $gap={19} $w={14}><svg width="14" height="20"><path d="M0 2h11v3H0z" fill="#8a6e9b" /><path d="M0 6h14v3H0z" fill="#85a9cf" /><path d="M0 10h5v3H0z" fill="#f3a77c" /><path d="M0 14h8v3H0z" fill="#fb7185" /></svg></Tool>
        <ShowMe>Show Me</ShowMe>
      </Toolbar>

      <Body>
        <DataPane>
          <PaneTabs>
            <PaneTab $active><Txt $ls={0.6}>Data</Txt></PaneTab>
            <PaneTab><Txt $ls={0.23}>Analytics</Txt><Svg w={6} h={12} sw={1.2}><path d="M5.500 1.500l-4 3.500 4 3.500" /></Svg></PaneTab>
          </PaneTabs>
          <SourceRow>
            <svg width="13" height="16" viewBox="0 0 13 16" fill="none" stroke="#666"><path d="M10 7V2.500C10 1.500 8 .7 5.300.7S.6 1.500.6 2.500s2 1.800 4.700 1.800S10 3.500 10 2.500M.6 2.500v9.500c0 1 1.500 1.500 3.400 1.700" /><circle cx="9.2" cy="11.8" r="3.6" fill={blue} stroke="none" /><path d="M7.500 11.800l1.300 1.300 2.200-2.500" stroke="#fff" /></svg>
            <Txt $ls={0.22}>airplane_crash (airplane...</Txt>
          </SourceRow>
          <SearchRow>
            <SearchBox><Txt $ls={0.2}>Search</Txt><SearchIcon><Svg w={10} h={10}><circle cx="6" cy="4" r="3.2" /><path d="M3.700 6.300.5 9.500" strokeWidth="1.3" /></Svg></SearchIcon></SearchBox>
            <Tool $gap={4} $w={14}><Svg w={14} h={14}><path d="M.8 1.500h12.400L8.500 7.500V12l-3 1.500v-6z" /></Svg></Tool>
            <SearchSep />
            <Svg w={12} h={11}><path d="M0 .5h12M0 3.500h12M0 6.500h12M0 9.500h12" strokeWidth="1.5" strokeDasharray="2.5 .7" stroke="#555" /></Svg>
            <Caret $gap={9} $w={7} />
          </SearchRow>
          <GroupTitle><Txt $ls={0.55}>Tables</Txt></GroupTitle>
          {dims.map((f) => <FieldLine key={f[0]} f={f} />)}
          <FieldRule />
          {measures.map((f) => <FieldLine key={f[0]} f={f} />)}
          <Params>
            <ParamTitle><Txt $ls={0.5}>Parameters</Txt></ParamTitle>
            <FieldLine f={['Parameter TOP 3 OPERA...', 'hash', green, 0.03]} />
          </Params>
        </DataPane>

        <Cards>
          <Card $h={62}><CardTitle><Txt $ls={-0.14}>Pages</Txt></CardTitle></Card>
          <Card $h={78}>
            <CardTitle><Txt $ls={0.05}>Filters</Txt></CardTitle>
            <FilterSlot><Pill $w={144} $c="#4996b2"><Txt $ls={0.2}>Location</Txt><SortIcon /></Pill></FilterSlot>
          </Card>
          <Card $h={218}>
            <CardTitle>Marks</CardTitle>
            <MarkType>
              <svg width="29" height="12" fill="none" stroke="#999" strokeWidth="1.2"><circle cx="17" cy="5.5" r="4.3" /></svg>
              <Txt $ls={-0.15}>Automatic</Txt>
              <SelectArrow $w={18}><Caret $w={7} /></SelectArrow>
            </MarkType>
            <MarkGrid>
              <MarkButton><Svg w={16} h={18}><g transform="translate(.5 1)"><Dots /></g></Svg><Txt $ls={-0.2}>Color</Txt></MarkButton>
              <MarkButton><Svg w={16} h={18}><circle cx="9.5" cy="7" r="5.5" /><circle cx="4.5" cy="12" r="3" fill="#fafafa" /></Svg><Txt $ls={-0.2}>Size</Txt></MarkButton>
              <MarkButton><Svg w={14} h={18}><path d="M.5 2.500h12v11H.5zM4 6.500V5h5v1.500M6.500 5v6M5 11h3" /></Svg><Txt $ls={-0.3}>Label</Txt></MarkButton>
              <MarkButton><Svg w={15} h={18}><circle cx="7.5" cy="5.5" r="2" fill="currentColor" stroke="none" /><circle cx="2.5" cy="11.5" r="1.7" /><circle cx="7.5" cy="11.5" r="1.7" /><circle cx="12.5" cy="11.5" r="1.7" /></Svg><Txt $ls={-0.2}>Detail</Txt></MarkButton>
              <MarkButton><Svg w={15} h={18}><path d="M.5 2.500h13v8.500h-3v3.500l-3.500-3.500H.5z" /></Svg><Txt $ls={-0.2}>Tooltip</Txt></MarkButton>
            </MarkGrid>
            <MarkPillRow>
              <Dots s={16} />
              <Pill $w={111} $c="#4996b2"><Txt $ls={0.2}>Location</Txt><SortIcon /></Pill>
            </MarkPillRow>
          </Card>
        </Cards>

        <Sheet>
          <Shelf>
            <ShelfName>
              <svg width="13" height="12" fill="#555"><path d="M1 0h2v2H1zM1 3h2v9H1zM5.500 0h2v2h-2zM5.500 3h2v9h-2zM10 0h2v2h-2zM10 3h2v9h-2z" /></svg>
              <Txt>Columns</Txt>
            </ShelfName>
            <Pill $w={148} $c="#00b180"><Txt $ls={0.22}>Longitude (generated)</Txt></Pill>
          </Shelf>
          <Shelf>
            <ShelfName>
              <svg width="13" height="12" fill="#555"><path d="M0 1h2v2H0zM3 1h10v2H3zM0 5h2v2H0zM3 5h10v2H3zM0 9h2v2H0zM3 9h10v2H3z" /></svg>
              <Txt $ls={-0.1}>Rows</Txt>
            </ShelfName>
            <Pill $w={148} $c="#00b180"><Txt $ls={0.26}>Latitude (generated)</Txt></Pill>
          </Shelf>
          <SheetRow>
            <Viz>
              <VizTitle>AIRPLAN CRASH -TOP 10 LOCATIONS OF ACCIDENTS</VizTitle>
              <VizFrame>
                <MapBox><WorldMap /></MapBox>
                <VScroll>
                  <ScrollArrow $r={0}><Chevron /></ScrollArrow><VThumb /><ScrollArrow $r={180}><Chevron /></ScrollArrow>
                </VScroll>
                <HScroll>
                  <ScrollArrow $r={-90}><Chevron /></ScrollArrow><HThumb /><ScrollArrow $r={90}><Chevron /></ScrollArrow>
                </HScroll>
              </VizFrame>
            </Viz>
            <Legend>
              <LegendHead>Location</LegendHead>
              {legend.map(([t, c, ls]) => (
                <LegendItem key={t}><Swatch $c={c} /><Txt $ls={ls}>{t}</Txt></LegendItem>
              ))}
            </Legend>
          </SheetRow>
        </Sheet>
      </Body>

      <SheetTabs>
        <SheetTab $w={131} $pl={9}><Svg w={10} h={13}><path d="M1 3v7c0 1 1.500 1.800 4 1.800S9 11 9 10V3c0-1-1.500-1.800-4-1.800S1 2 1 3s1.500 1.600 4 1.600S9 4 9 3" /></Svg><Txt $ls={0.3}>Data Source</Txt></SheetTab>
        <SheetTab $w={201} $pl={6}><Txt $ls={0.18}>Comparison of aboard, ground a...</Txt></SheetTab>
        <SheetTab $w={128} $mark><Txt $ls={0.05}>Year wise accident 1</Txt></SheetTab>
        <SheetTab $w={173} $active><Txt $ls={0.3}>Top 10 locations of accident</Txt></SheetTab>
        <SheetTab $w={190} $pl={6}><Txt $ls={0.36}>OPERATOR  MAX ACCIDENTS</Txt></SheetTab>
        <SheetTab $w={200}><Txt $ls={0.34}>TOP 3 OPERATORS IN ACCIDE...</Txt></SheetTab>
        <SheetTab $w={173} $pl={7}><Svg w={11} h={12}><path d="M.5.5h10v10H.5zM5.500.5v10M.5 5.500h10" /></Svg><Txt $ls={0.25}>Dashboard -Dinesh team</Txt></SheetTab>
        <SheetTab $w={74} $pl={6}><Svg w={12} h={13}><path d="M.5 1.500c2 0 4 .5 5.500 2 1.500-1.500 3.500-2 5.500-2v9c-2 0-4 .5-5.500 2-1.500-1.500-3.500-2-5.500-2zM6 3.500v9" /></Svg><Txt $ls={0.45}>STORY-F</Txt></SheetTab>
        <SheetTab $w={32} $pl={9}><Svg w={16} h={16}><path d="M6 12.500H.5v-11h11V6M3.500 10V8M5.500 10V6M7.500 9V4" /><path d="M11.500 8v8M7.500 12h8" strokeWidth="2" stroke="#555" /></Svg></SheetTab>
        <SheetTab $w={32} $pl={9}><Svg w={16} h={16}><path d="M7 11.500H.5v-10h11V7M5.500 1.500v10M.5 6.500h11" /><path d="M11.500 8v8M7.500 12h8" strokeWidth="2" stroke="#555" /></Svg></SheetTab>
        <SheetTab $w={32} $pl={9}><Svg w={16} h={16}><path d="M6 12.500c-1.500-1-3.500-1.500-5.500-1.500V2c2 0 4 .5 5.500 2 1.500-1.500 3.500-2 5.500-2v4.500M6 4v8.500" /><path d="M11.500 8v8M7.500 12h8" strokeWidth="2" stroke="#555" /></Svg></SheetTab>
      </SheetTabs>

      <StatusBar>
        <StatusCell $w={999} $pl={3} $gap={16}><Txt $ls={-0.1}>10 marks</Txt><Txt $ls={-0.28}>1 row by 1 column</Txt></StatusCell>
        <StatusCell $w={127} $pl={6} $gap={9} $line>
          <Svg w={10} h={14}><circle cx="5" cy="3.2" r="2.5" /><path d="M.5 12.500V9c0-1.500 2-2 4.500-2s4.500.5 4.500 2v3.500z" /></Svg>
          <Txt>DINESH KUM...</Txt><Caret $w={8} $c="#000" />
        </StatusCell>
        <StatusCell $w={27} $line /><StatusCell $w={27} $line /><StatusCell $w={47} $line />
        <StatusCell $w={71} $pl={8} $line>
          <svg width="55" height="8" fill="#555"><path d="M0 .5h1.500v7H0zM7 .5v7L2.500 4zM22 .5v7L17.500 4zM34 .5v7L38.500 4zM49 .5v7L53.500 4zM53 .5h1.500v7H53z" /></svg>
        </StatusCell>
        <StatusCell $w={68} $pl={8} $gap={10} $line>
          <svg width="11" height="11" fill="#b9b9b9"><path d="M0 0h3v3H0zM4 0h3v3H4zM8 0h3v3H8zM0 4h3v3H0zM4 4h3v3H4zM8 4h3v3H8zM0 8h3v3H0zM4 8h3v3H4zM8 8h3v3H8z" /></svg>
          <svg width="11" height="11" fill="#b9b9b9"><path d="M0 0h11v7H0zM0 8h3v3H0zM4 8h3v3H4zM8 8h3v3H8z" /></svg>
          <svg width="11" height="11" fill="#666"><path d="M0 0h11v11H0z" /></svg>
        </StatusCell>
      </StatusBar>

      <Taskbar>
        <Task $ml={0}><svg width="16" height="16" fill="#fff"><path d="M0 2.300 6.800 1.300v6.200H0zM7.600 1.200 16 0v7.500H7.600zM0 8.300h6.800v6.300L0 13.700zM7.600 8.300H16V16l-8.400-1.200z" /></svg></Task>
        <Task $ml={3}><svg width="24" height="24"><path fill="#ef443b" d="M0 0h24v24H0z" /><path fill="#fff" d="M8.500 7l5 5-5 5-5-5zM12.500 7.500 14 6.500 20 12l-6 5.500-1.500-1 4-4.500z" /></svg></Task>
        <Task>
          <svg width="24" height="24"><ellipse cx="13" cy="8" rx="11" ry="6.5" transform="rotate(-25 13 8)" fill="#f4f4f4" /><ellipse cx="14" cy="7.5" rx="7" ry="3" transform="rotate(-25 14 7.5)" fill="none" stroke="#e9a3a5" strokeWidth="1.3" /><path d="M2 13c2 4 9 4 14 0l-2 4c-4 3-9 2-12-1z" fill="#c9c9cb" /><path d="M10 10l7-5" stroke="#d9343a" strokeWidth="1.5" /><path d="M14 12l3 5M18 11l-2 6" stroke="#8a9097" strokeWidth="1.5" /><g fill="none" stroke="#2a8bc4" strokeWidth="2"><circle cx="14.5" cy="20" r="2.5" /><circle cx="20" cy="18" r="2.5" /></g></svg>
        </Task>
        <Task $bar="#76b9ed" $barW={40}>
          <svg width="22" height="20"><path fill="#e8a92e" d="M0 1h8l2 3h11v4H0z" /><path fill="#fbd66f" d="M0 5h22v14H0z" /><path fill="#3d8fd8" d="M4 19v-7h14v7h-4v-4H8v4z" /></svg>
        </Task>
        <Task $bar="#76b9ed" $barW={40}>
          <svg width="24" height="24" viewBox="0 0 24 24"><circle cx="12" cy="12" r="12" fill="#fbc116" /><path d="M1.600 6A12 12 0 0 0 11 24l6-9-5-3z" fill="#229a48" /><path d="M1.600 6 7 14.500 12 7h10.900A12 12 0 0 0 1.600 6z" fill="#dc4335" /><circle cx="12" cy="12" r="5.8" fill="#fff" /><circle cx="12" cy="12" r="4.5" fill="#3d7fe6" /></svg>
        </Task>
        <Task>
          <svg width="22" height="23"><path fill="#0a0a0a" d="M11 1l9 9c3 3 0 4.500-3 5l1 2-4 1-2 4-3-3 2-1.500-6-1.500 1-1.500c-4-.5-7-1.500-4.500-4.500z" /><path fill="#dfe5ec" d="M11 2.500l4.500 4.500-2 1-2-1.500L9.500 9 7 7z" /><path fill="#5d7ba3" d="M7 7.500 3 12c3 1 7 2 11 1.500L9 10z" opacity=".8" /></svg>
        </Task>
        <Task $bg="#a86228" $bar="#ff7a0e" $barW={48}>
          <svg width="24" height="20"><path d="M1 1h6.500l2 10 3-8h5.500l-1.500 6-3.500 9H7z" fill="#f4351c" /><path d="M18 1h6L18 18h-5.500l3-8z" fill="#ff5f2a" /></svg>
        </Task>
        <Task $bar="#76b9ed" $barW={40}>
          <svg width="25" height="24" viewBox="0 0 25 24"><defs><linearGradient id="eg"><stop offset="0" stopColor="#2fa6ee" /><stop offset="1" stopColor="#5ddb62" /></linearGradient></defs><path fill="#1478cf" d="M1 11C2 4 7 0 12.500 0S9 7 9 12c0 6 6 9 12 7-2 3-5 5-9 5C5 24 0 18 1 11z" /><path fill="url(#eg)" d="M1 11C2 4 7 0 12.500 0 20 0 25 5 25 10c0 4-3 6-6 6s-5-1-3.500-3C17 10 14 7 10.500 7 6 7 2.500 9 1 11z" /><path fill="#0d4f9e" d="M9 12c-1 7 6 10 12 7-3 4-9 6-13 2-3-3-2-8 1-9z" /></svg>
        </Task>
        <Task $bar="#76b9ed" $barW={40}>
          <svg width="24" height="24"><path fill="#1f8ad2" d="M17.500 0 24 3v18l-6.500 3L6 13.500 2.500 16.500.5 15.500v-7l2-1 3.500 3z" /><path fill="#252021" d="M17.500 7v10L11 12zM2 10l2 2-2 2z" /><path fill="#3aa8f0" d="M17.500 0 24 3v18l-6.500 3z" /></svg>
        </Task>
        <Task $bg="#5b5557" $bar="#76b9ed" $barW={48}>
          <svg width="24" height="24"><path d="M0 0h24v24H0z" fill="#f5f5f5" /><g transform="translate(2 2)"><TableauMark s={20} /></g></svg>
        </Task>

        <Tray>
          <TrayItem $gap={0} $w={26}>
            <svg width="26" height="26"><defs><linearGradient id="sun" x1="0" y1="0" x2="0" y2="1"><stop offset="0" stopColor="#fbb62c" /><stop offset="1" stopColor="#f27f1b" /></linearGradient></defs><circle cx="12" cy="13" r="10" fill="url(#sun)" /><g fill="#c3d7f5"><path d="M2 9a3 3 0 0 1 1-5 4.500 4.500 0 0 1 8-1 3 3 0 0 1 3 6z" /><path d="M13 23a3 3 0 0 1 1-5 4 4 0 0 1 7-1 3 3 0 0 1 2 6z" /></g></svg>
          </TrayItem>
          <TrayItem $gap={7} $w={38}><Txt $ls={-0.4}>31°C</Txt></TrayItem>
          <TrayItem $gap={0} $w={76}><Txt $ls={-0.65}>Partly sunny</Txt></TrayItem>
          <TrayItem $gap={23} $w={13}><Svg w={13} h={8} sw={1.3}><path d="M1 7l5.500-5.500L12 7" /></Svg></TrayItem>
          <TrayItem $gap={10} $w={16}><Svg w={16} h={10} sw={1.3}><path d="M.7.7h12.600v8.600H.7zM14.500 3v4M3 2.500v5" /></Svg></TrayItem>
          <TrayItem $gap={10} $w={14}><Svg w={14} h={14} sw={1.2}><path d="M1 13.500A12 12 0 0 1 13 1.500M4.500 13.500A8.500 8.500 0 0 1 13 5M8 13.500A5 5 0 0 1 13 8.500" /><circle cx="12" cy="12.5" r="1.2" fill="#fff" stroke="none" /></Svg></TrayItem>
          <TrayItem $gap={7} $w={18}><Svg w={18} h={14} sw={1.1}><path d="M.5 4.500H3l4-3.500v12L3 9.500H.5zM9.500 5c1 1 1 3 0 4M12 3c2 2 2 6 0 8M14.500 1c3 3 3 9 0 12" /></Svg></TrayItem>
          <Language $gap={8} $w={26}>ENG</Language>
          <Clock $gap={9} $w={60}><Txt $ls={-0.37}>11:33 PM</Txt><br /><Txt $ls={-0.4}>21-04-2023</Txt></Clock>
          <TrayItem $gap={17} $w={26}>
            <svg width="26" height="26"><path fill="#fff" d="M0 3h16v12H7l-3 3v-3H0z" /><path d="M3 6.500h10M3 9h10M3 11.500h6" stroke="#252222" /><circle cx="15.5" cy="17.5" r="7.7" fill="#2a2727" stroke="#8d8b8b" /><text x="15.3" y="22" textAnchor="middle" fill="#fff" fontSize="12" fontFamily='"Noto Sans", sans-serif'>11</text></svg>
          </TrayItem>
          <PeekEdge />
        </Tray>
      </Taskbar>
    </Window>
  );
}
